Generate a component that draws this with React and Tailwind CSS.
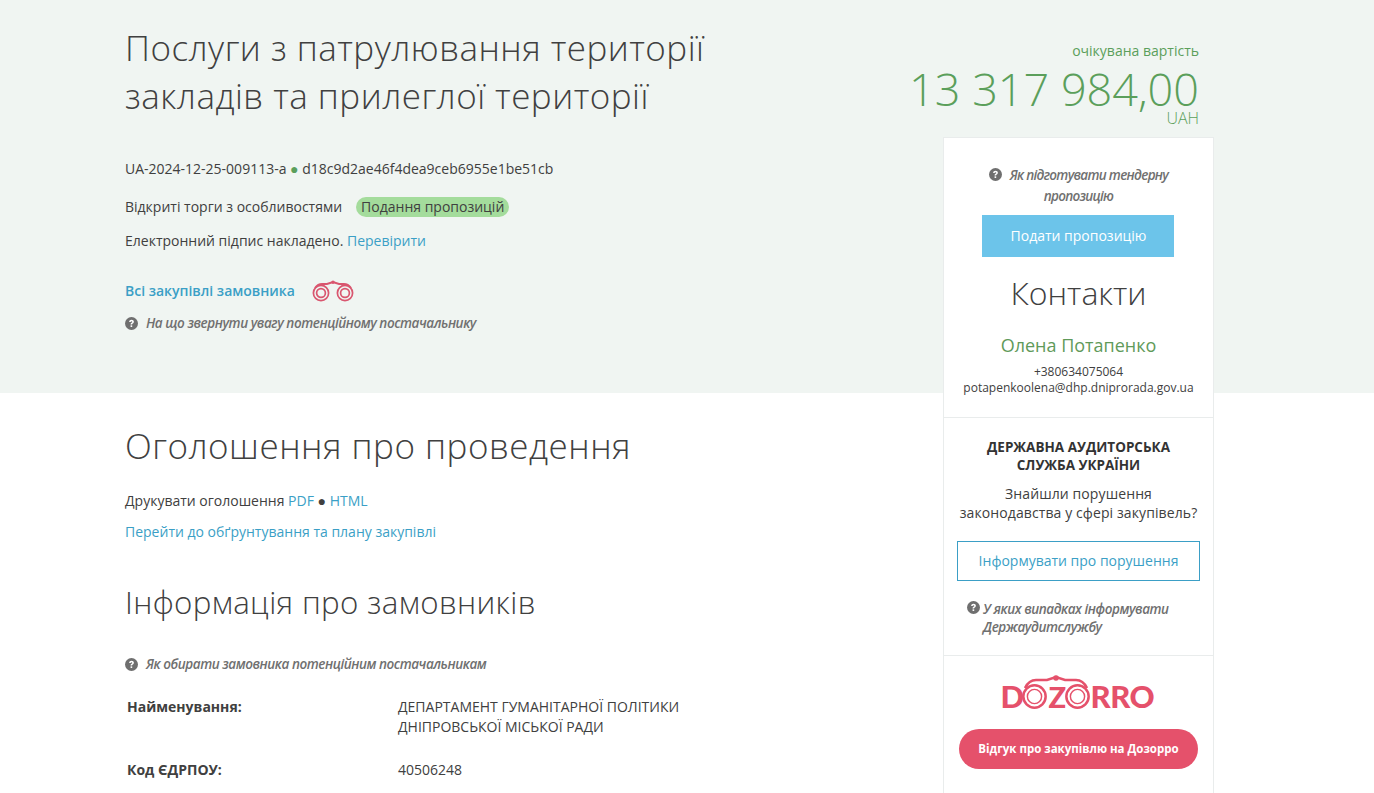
import React from "react";

const Q = ({ className = "" }) => (
  <svg viewBox="0 0 24 24" className={`inline-block w-[13px] h-[13px] ${className}`} fill="#6f6f6f">
    <circle cx="12" cy="12" r="12" />
    <path d="M7.6 9.2c.2-2.4 2-3.9 4.5-3.9 2.5 0 4.3 1.5 4.3 3.6 0 1.6-.9 2.4-2.1 3.2-.9.6-1.1.9-1.1 1.9h-2.9c0-1.8.4-2.5 1.7-3.4.9-.6 1.4-1 1.4-1.6 0-.7-.6-1.2-1.4-1.2-.9 0-1.4.5-1.5 1.4z" fill="#fff" />
    <rect x="10.3" y="15.4" width="3" height="3" fill="#fff" />
  </svg>
);

const Binoculars = () => (
  <svg viewBox="0 0 42 22" className="w-[42px] h-[22px]" fill="none" stroke="#d9566f" strokeWidth="1.7">
    <circle cx="9" cy="13" r="7.6" />
    <circle cx="9" cy="13" r="4.4" />
    <circle cx="33" cy="13" r="7.6" />
    <circle cx="33" cy="13" r="4.4" />
    <path d="M3 8 Q6 4 10 4 H15 L21 2 L27 4 H32 Q36 4 39 8" strokeWidth="2" />
    <circle cx="21" cy="2.2" r="1.7" fill="#d9566f" stroke="none" />
  </svg>
);

const Ring = () => (
  <svg viewBox="0 0 26 26" className="w-[25px] h-[25px] shrink-0" fill="none" stroke="#e5516b">
    <circle cx="13" cy="13" r="11.6" strokeWidth="2.6" />
    <circle cx="13" cy="13" r="7.4" strokeWidth="1.5" />
  </svg>
);

const Logo = () => (
  <div className="flex justify-center pr-[4px]">
    <div className="relative flex items-center h-[25px] w-[152px] font-['Lato',sans-serif] font-black text-[31px] leading-none text-[#e5516b]">
      <span className="w-[21px]">D</span>
      <Ring />
      <span className="w-[16px] ml-[2px] text-[29px]">Z</span>
      <Ring />
      <span className="ml-[1px] tracking-[-0.4px]">RRO</span>
      <svg viewBox="0 0 66 14" className="absolute left-[22px] top-[-9px] w-[66px] h-[14px]" fill="none" stroke="#e5516b" strokeWidth="2.6">
        <path d="M2 13 Q6 5 13 5 H24 L33 2 L42 5 H53 Q60 5 64 13" />
        <circle cx="33" cy="3" r="2.8" fill="#e5516b" stroke="none" />
      </svg>
    </div>
  </div>
);

const hint = "italic font-semibold text-[#707070] tracking-[-0.45px] text-[13.5px]";

export default function App() {
  return (
    <div className="relative h-[793px] overflow-hidden bg-white font-['Open_Sans',sans-serif] text-[14px] leading-[20px] text-[#404040]">
      <div className="absolute inset-x-0 top-0 h-[393px] bg-[#f0f5f2]" />
      <div className="relative flex pl-[125px]">
        <main className="w-[818px] shrink-0">
          <h1 className="w-[640px] pt-[24px] text-[35px] leading-[48px] font-light tracking-[0.47px]">
            Послуги з патрулювання території закладів та прилеглої території
          </h1>
          <p className="mt-[39px]">
            UA-2024-12-25-009113-a <span className="text-[#5b9f5b]">●</span> d18c9d2ae46f4dea9ceb6955e1be51cb
          </p>
          <div className="mt-[17px] flex items-center h-[22px]">
            <span>Відкриті торги з особливостями</span>
            <span className="ml-[14px] rounded-full bg-[#a4dc9c] px-[5px] h-[20px]">Подання пропозицій</span>
          </div>
          <p className="mt-[13px]">
            Електронний підпис накладено. <a className="text-[#3b9fc6]">Перевірити</a>
          </p>
          <div className="mt-[25px] flex items-center h-[30px]">
            <a className="font-semibold text-[#3b9fc6]">Всі закупівлі замовника</a>
            <span className="ml-[17px]"><Binoculars /></span>
          </div>
          <p className={`mt-[7px] flex items-center gap-[8px] ${hint}`}>
            <Q /> На що звернути увагу потенційному постачальнику
          </p>

          <h2 className="mt-[89px] text-[35px] leading-[48px] font-light tracking-[0.5px]">Оголошення про проведення</h2>
          <p className="mt-[21px]">
            Друкувати оголошення <a className="text-[#3b9fc6]">PDF</a> ● <a className="text-[#3b9fc6]">HTML</a>
          </p>
          <p className="mt-[11px]">
            <a className="text-[#3b9fc6]">Перейти до обґрунтування та плану закупівлі</a>
          </p>
          <h2 className="mt-[36px] text-[31.3px] leading-[48px] font-light tracking-[0.35px]">Інформація про замовників</h2>
          <p className={`mt-[28px] flex items-center gap-[8px] ${hint}`}>
            <Q /> Як обирати замовника потенційним постачальникам
          </p>
          <dl className="mt-[23px] grid grid-cols-[271px_300px] gap-y-[23px] pl-[2px]">
            <dt className="font-bold">Найменування:</dt>
            <dd>ДЕПАРТАМЕНТ ГУМАНІТАРНОЇ ПОЛІТИКИ ДНІПРОВСЬКОЇ МІСЬКОЇ РАДИ</dd>
            <dt className="font-bold">Код ЄДРПОУ:</dt>
            <dd>40506248</dd>
          </dl>
        </main>

        <aside className="w-[271px] shrink-0">
          <div className="flex flex-col items-end h-[137px] pr-[15px] text-[#5b9f5b]">
            <div className="pt-[41px]">очікувана вартість</div>
            <div className="mt-[7px] text-[45px] leading-[42px] font-light whitespace-nowrap">13 317 984,00</div>
            <div className="text-[16px] leading-[16px] font-light">UAH</div>
          </div>
          <div className="border border-[#e9ecec] bg-white text-center">
            <section className="px-[13px] pt-[27px] pb-[21px] border-b border-[#e9ecec]">
              <p className="px-[15px] leading-[21px] italic font-semibold text-[#707070] tracking-[-0.7px] text-[13.5px]">
                <Q className="mr-[8px] align-[-1px]" />Як підготувати тендерну пропозицію
              </p>
              <button className="mt-[8px] mr-[2px] pl-[2px] w-[192px] h-[42px] bg-[#6cc4ea] text-white">Подати пропозицію</button>
              <div className="mt-[12px] text-[32px] leading-[48px] font-light">Контакти</div>
              <div className="mt-[16px] text-[18px] leading-[24px] text-[#5f9a5a]">Олена Потапенко</div>
              <div className="mt-[7px] text-[12px] leading-[16px]">
                +380634075064
                <br />
                potapenkoolena@dhp.dniprorada.gov.ua
              </div>
            </section>
            <section className="px-[13px] pt-[20px] pb-[19px] border-b border-[#e9ecec]">
              <div className="font-bold text-[13.5px] leading-[18px] text-[#333] px-[20px]">ДЕРЖАВНА АУДИТОРСЬКА СЛУЖБА УКРАЇНИ</div>
              <p className="mt-[10px] leading-[19px] tracking-[0.1px]">
                Знайшли порушення законодавства у сфері закупівель?
              </p>
              <button className="mt-[19px] w-[243px] h-[40px] border border-[#3b9fc6] text-[#3b9fc6]">Інформувати про порушення</button>
              <p className={`relative mt-[19px] pl-[26px] text-left leading-[18px] ${hint}`}>
                <Q className="absolute left-[10px] top-[1px]" />
                У яких випадках інформувати Держаудитслужбу
              </p>
            </section>
            <section className="px-[15px] pt-[28px] pb-[40px]">
              <Logo />
              <button className="mt-[20px] w-[239px] h-[40px] rounded-full bg-[#e5516b] text-white text-[11.5px] font-bold">
                Відгук про закупівлю на Дозорро
              </button>
            </section>
          </div>
        </aside>
      </div>
    </div>
  );
}
